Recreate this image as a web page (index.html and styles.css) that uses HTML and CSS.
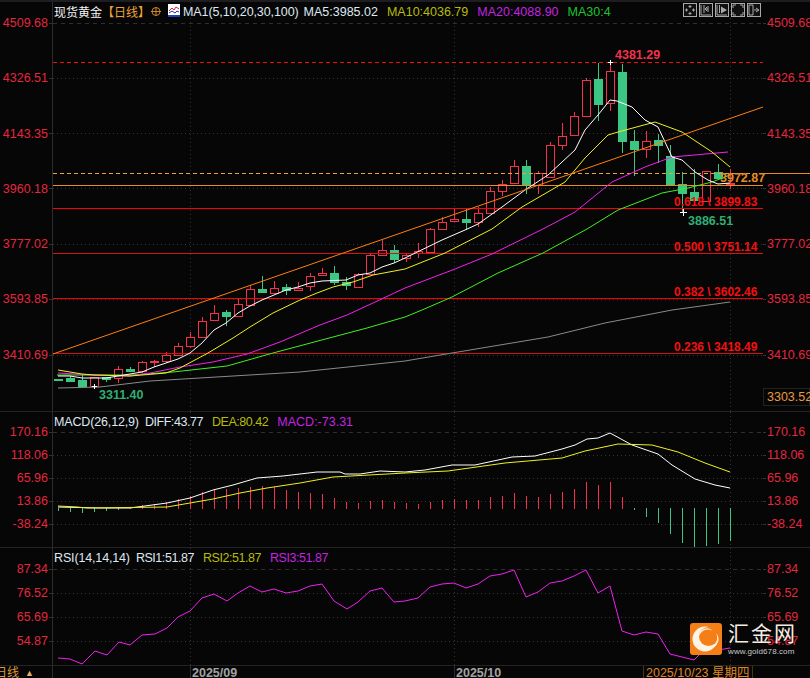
FILE: index.html
```html
<!DOCTYPE html>
<html lang="zh-CN">
<head>
  <meta charset="UTF-8" />
  <title>现货黄金 日线</title>
  <link rel="stylesheet" href="styles.css">
</head>
<body>
  <div class="topbar"></div>

  <!-- price panel -->
  <section class="panel panel-price">
    <div class="scale scale-left">
      <span class="tick">4509.68</span><span class="tick">4326.51</span><span class="tick">4143.35</span><span class="tick">3960.18</span><span class="tick">3777.02</span><span class="tick">3593.85</span><span class="tick">3410.69</span>
    </div>
    <div class="plot">
      <svg class="chart" width="710" height="409" viewBox="53 2 710 409">
        <g id="priceGrid"></g>
        <g id="candles"></g>
        <line class="hl hl-dash-red" x1="53" x2="763" y1="62.5" y2="62.5"/>
        <line class="hl hl-dash-orange" x1="53" x2="763" y1="173.5" y2="173.5"/>
        <line class="hl hl-orange" x1="763" x2="810" y1="173.5" y2="173.5"/>
        <line class="hl hl-orange" x1="53" x2="763" y1="185.5" y2="185.5"/>
        <line class="hl hl-red" x1="53" x2="763" y1="208.5" y2="208.5"/>
        <line class="hl hl-red-dim" x1="53" x2="763" y1="253.5" y2="253.5"/>
        <line class="hl hl-red" x1="53" x2="763" y1="298.5" y2="298.5"/>
        <line class="hl hl-red-dim" x1="53" x2="763" y1="353.5" y2="353.5"/>
        <g id="priceLines"></g>
        <line class="trend" x1="53" y1="354" x2="763" y2="107"/>
        <g class="marks">
          <path d="M608 62.5h5M610.5 60v5M680 212.5h7M683.5 209v7M92 386.5h5M94.5 384v5"/>
        </g>
        <text class="note note-high" x="615" y="59">4381.29</text>
        <text class="note note-low" x="688" y="225">3886.51</text>
        <text class="note note-low" x="99" y="399">3311.40</text>
        <text class="note note-last" x="720" y="182">3972.87</text>
        <text class="fib" x="674" y="206">0.618 \ 3899.83</text>
        <text class="fib" x="674" y="251">0.500 \ 3751.14</text>
        <text class="fib" x="674" y="296">0.382 \ 3602.46</text>
        <text class="fib" x="674" y="351">0.236 \ 3418.49</text>
      </svg>
      <div class="legend">
        <span class="name">现货黄金</span><span class="period">【日线】</span>
        <svg class="icon-cross" width="10" height="11" viewBox="0 0 10 11"><circle cx="5" cy="5.5" r="4"/><path d="M0 5.500h10M5 1v9"/></svg>
        <svg class="icon-ma" width="12" height="13" viewBox="0 0 12 13">
          <rect width="12" height="13" fill="#fff"/>
          <path d="M0 12h12" stroke="#1a3fc0" stroke-width="2"/>
          <path d="M1 7l3-3 2 2 2-3 3 2" fill="none" stroke="#e02020"/>
          <path d="M1 9l3-2 3 2 2-2 2 1" fill="none" stroke="#2030c0"/>
        </svg>
        <span class="white ma-name">MA1(5,10,20,30,100)</span>
        <span class="white ma-first">MA5:3985.02</span>
        <span class="olive value">MA10:4036.79</span>
        <span class="purple value">MA20:4088.90</span>
        <span class="green value">MA30:4</span>
      </div>
      <div class="toolbar">
        <button class="tool"><svg width="12" height="12" viewBox="0 0 12 12"><path d="M6 1v3M6 8v3M1 6h3M8 6h3M4.5 2.5h3M4.5 9.5h3M2.5 4.5v3M9.5 4.5v3"/></svg></button>
        <button class="tool"><svg width="12" height="12" viewBox="0 0 12 12"><path d="M1 1v10h10M4 1v8M8 2v6M5 5h3M5 5l2-2M5 5l2 2"/></svg></button>
        <button class="tool"><svg width="12" height="12" viewBox="0 0 12 12"><path d="M1 1v10h10M3.500 1v8"/><path class="solid" d="M5 2.500l6 3.500-6 3.500z"/></svg></button>
        <button class="tool"><svg width="12" height="12" viewBox="0 0 12 12"><path d="M1 4V1h3M8 1h3v3M11 8v3H8M4 11H1V8"/></svg></button>
        <button class="tool"><svg width="12" height="12" viewBox="0 0 12 12"><path d="M1 1h4v10H1zM6 6h4M8 4l3 2-3 2"/></svg></button>
      </div>
    </div>
    <div class="scale scale-right">
      <span class="tick">4509.68</span><span class="tick">4326.51</span><span class="tick">4143.35</span><span class="tick">3960.18</span><span class="tick">3777.02</span><span class="tick">3593.85</span><span class="tick">3410.69</span>
      <span class="last-tag">3303.52</span>
    </div>
  </section>

  <!-- MACD panel -->
  <section class="panel panel-macd">
    <div class="scale scale-left">
      <span class="tick">170.16</span><span class="tick">118.06</span><span class="tick">65.96</span><span class="tick">13.86</span><span class="tick">-38.24</span>
    </div>
    <div class="plot">
      <svg class="chart" width="710" height="135" viewBox="53 412 710 135">
        <g id="macdGrid"></g>
        <g id="macdBars"></g>
        <g id="macdLines"></g>
      </svg>
      <div class="legend">
        <span class="white title">MACD(26,12,9)</span>
        <span class="white tight value-first">DIFF:43.77</span>
        <span class="olive tight value">DEA:80.42</span>
        <span class="purple value">MACD:-73.31</span>
      </div>
    </div>
    <div class="scale scale-right">
      <span class="tick">170.16</span><span class="tick">118.06</span><span class="tick">65.96</span><span class="tick">13.86</span><span class="tick">-38.24</span>
    </div>
  </section>

  <!-- RSI panel -->
  <section class="panel panel-rsi">
    <div class="scale scale-left">
      <span class="tick">87.34</span><span class="tick">76.52</span><span class="tick">65.69</span><span class="tick">54.87</span>
    </div>
    <div class="plot">
      <svg class="chart" width="710" height="117" viewBox="53 548 710 117">
        <g id="rsiGrid"></g>
        <g id="rsiLines"></g>
      </svg>
      <div class="legend">
        <span class="white title">RSI(14,14,14)</span>
        <span class="white tight value-first">RSI1:51.87</span>
        <span class="olive tight value">RSI2:51.87</span>
        <span class="purple tight value">RSI3:51.87</span>
      </div>
    </div>
    <div class="scale scale-right">
      <span class="tick">87.34</span><span class="tick">76.52</span><span class="tick">65.69</span><span class="tick">54.87</span>
    </div>
  </section>

  <footer class="time-axis">
    <div class="time-corner"><span class="corner-text">日线</span><span class="corner-arrow">▲</span></div>
    <div class="time-labels">
      <span class="month month-sep">2025/09</span>
      <span class="month month-oct">2025/10</span>
      <span class="cursor-date">2025/10/23 星期四</span>
    </div>
  </footer>

  <div class="watermark">
    <svg class="logo" width="32" height="32" viewBox="0 0 32 32">
      <rect width="32" height="32" rx="3" fill="#f57f17"/>
      <circle cx="15" cy="16" r="12.500" fill="#fdf3e6"/>
      <circle cx="18.500" cy="13.500" r="9.500" fill="#f57f17"/>
      <path d="M9 13a9.500 9.500 0 0 1 14-5a8 8 0 0 0-14 5z" fill="#fdf3e6"/>
      <path d="M26 10a11 11 0 0 1-5 15a9 9 0 0 0 5-15z" fill="#fdf3e6"/>
    </svg>
    <div class="brand">
      <span class="brand-name">汇金网</span>
      <span class="brand-url">www.gold678.com</span>
    </div>
  </div>

  <script src="chart.js"></script>
</body>
</html>
```

FILE: styles.css
```css
* {
  margin: 0;
  padding: 0;
  box-sizing: border-box;
}
html, body {
  width: 810px;
  height: 678px;
  overflow: hidden;
  background: #060606;
  font-family: "Liberation Sans", "Noto Sans CJK SC", sans-serif;
  font-size: 12.5px;
}

.topbar {
  height: 2px;
  background: #1d1d22;
}

.panel {
  display: grid;
  grid-template-columns: 53px 710px 47px;
  border-bottom: 1px solid #242424;
}
.panel-price { height: 410px; --pitch: 55.3px; --start: 15px; }
.panel-macd { height: 136px; --pitch: 23px; --start: 14px; }
.panel-rsi { height: 118px; --pitch: 24px; --start: 15px; }

.scale {
  display: flex;
  flex-direction: column;
  padding-top: var(--start);
  color: #e4263f;
  position: relative;
}
.scale-left {
  align-items: flex-end;
  padding-right: 4px;
  border-right: 1px solid #2c2c2c;
}
.scale-right {
  padding-left: 4px;
  white-space: nowrap;
}
.tick {
  height: var(--pitch);
  line-height: 12px;
  flex: none;
}

.last-tag {
  position: absolute;
  top: 386px;
  left: 0;
  width: 47px;
  height: 18px;
  padding-left: 3px;
  line-height: 17px;
  border: 1px solid #222;
  color: #e89a3c;
}

.plot {
  position: relative;
}
.chart {
  display: block;
  overflow: visible;
}

.legend {
  position: absolute;
  top: 0;
  left: 1px;
  height: 19px;
  display: flex;
  align-items: center;
  white-space: nowrap;
  pointer-events: none;
}
.name { color: #f2f2f2; font-size: 12px; }
.period { color: #eda23a; font-size: 12px; }
.icon-cross { fill: none; stroke: #c9872c; margin-left: 1px; }
.icon-ma { margin-top: -3px; margin-left: 7px; }
.ma-name { margin-left: 3px; letter-spacing: -0.1px; }
.ma-first { margin-left: 5px; }
.value { margin-left: 9px; }
.value-first { margin-left: 6px; }
.title { letter-spacing: -0.15px; }
.tight { letter-spacing: -0.45px; }
.white { color: #dfe8f2; }
.olive { color: #b8bb0c; }
.purple { color: #c423e0; }
.green { color: #1fc32c; }

.toolbar {
  position: absolute;
  top: 1px;
  right: 2px;
  display: flex;
  gap: 2px;
}
.tool {
  width: 14px;
  height: 14px;
  border: 1px solid #a8a8a8;
  background: #101010;
  display: flex;
  align-items: center;
  justify-content: center;
}
.tool svg { fill: none; stroke: #a8a8a8; stroke-width: 1; }
.tool .solid { fill: #a8a8a8; stroke: none; }

/* chart strokes */
.grid { stroke: #343434; stroke-dasharray: 1 3; shape-rendering: crispEdges; }
.grid-dash { stroke: #2e2e2e; stroke-dasharray: 4 4; shape-rendering: crispEdges; }
.axis-tick { stroke: #333; shape-rendering: crispEdges; }
.hl { stroke-width: 1; shape-rendering: crispEdges; }
.hl-dash-red { stroke: #f01010; stroke-dasharray: 4 3; }
.hl-dash-orange { stroke: #f0a030; stroke-dasharray: 4 3; }
.hl-orange { stroke: #ee8a1c; }
.hl-red { stroke: #ff0000; }
.hl-red-dim { stroke: #d81010; }
.trend { stroke: #ff7f10; stroke-width: 1; }

.wick-red, .body-red { stroke: #f4304c; }
.body-red { fill: #060606; }
.wick-green { stroke: #3cc684; }
.body-green { fill: #3cc684; stroke: #3cc684; }
.wick-red, .wick-green, .body-red, .body-green { shape-rendering: crispEdges; stroke-width: 1; }

.ma { fill: none; stroke-width: 1; }
.ma5 { stroke: #ffffff; }
.ma10 { stroke: #f0f020; }
.ma20 { stroke: #f020f0; }
.ma30 { stroke: #40f020; }
.ma100 { stroke: #8a8a8a; }
.rsi { stroke: #f020f0; }

.marks path { stroke: #fff; fill: none; shape-rendering: crispEdges; }

.note, .fib { font-size: 12.5px; font-family: "Liberation Sans", sans-serif; }
.note-high { fill: #f0334d; font-weight: bold; }
.note-low { fill: #2fae74; font-weight: bold; }
.note-last { fill: #e58a26; font-weight: bold; }
.fib { fill: #f50f0f; font-weight: bold; font-size: 12px; }

/* time axis */
.time-axis {
  display: grid;
  grid-template-columns: 53px 1fr;
  height: 12px;
  overflow: hidden;
  line-height: 14px;
}
.time-corner {
  position: relative;
  display: flex;
  justify-content: flex-end;
  gap: 6px;
  padding-right: 18px;
  border-right: 1px solid #2c2c2c;
  color: #dd9a3a;
  white-space: nowrap;
}
.corner-text { font-size: 12px; }
.corner-arrow { font-size: 9px; color: #dfb070; }
.time-labels {
  display: flex;
  padding-left: 137px;
  white-space: nowrap;
}
.month {
  color: #a3a3a3;
  font-weight: bold;
  border-left: 1px solid #2c2c2c;
  padding-left: 1px;
}
.month-sep { width: 264px; }
.month-oct { width: 189px; }
.cursor-date {
  color: #df8524;
  width: 110px;
  padding-left: 2px;
  border-left: 1px solid #4a3416;
  border-right: 1px solid #4a3416;
}

.watermark {
  position: absolute;
  top: 623px;
  left: 690px;
  display: flex;
  gap: 6px;
}
.logo { display: block; }
.brand {
  display: flex;
  flex-direction: column;
  color: #f4ebe0;
}
.brand-name {
  font-size: 21px;
  line-height: 22px;
  letter-spacing: 2px;
  white-space: nowrap;
}
.brand-url {
  font-size: 8px;
  line-height: 10px;
  margin-top: 2px;
  color: #c9c9c9;
  letter-spacing: 0.1px;
  white-space: nowrap;
}
```

FILE: chart.js
```js
// pixel data read off the chart: page coordinates, the svg viewBoxes use the same ones
const SVG_NS = "http://www.w3.org/2000/svg";

function add(parent, tag, cls, attrs) {
  const el = document.createElementNS(SVG_NS, tag);
  el.setAttribute("class", cls);
  for (const k in attrs) el.setAttribute(k, attrs[k]);
  parent.appendChild(el);
  return el;
}

function polyline(parent, cls, pts) {
  add(parent, "polyline", "ma " + cls, { points: pts.map(p => p.join(",")).join(" ") });
}

function drawGrid(id, rows, top, bottom) {
  const g = document.getElementById(id);
  rows.forEach((y, i) => {
    add(g, "line", i === 0 ? "grid-dash" : "grid", { x1: 53, x2: 763, y1: y, y2: y });
    add(g, "line", "axis-tick", { x1: 49, x2: 52, y1: y, y2: y });
    add(g, "line", "axis-tick", { x1: 763, x2: 766, y1: y, y2: y });
  });
  [190.5, 454.5, 730.5].forEach(x => {
    add(g, "line", "grid", { x1: x, x2: x, y1: top, y2: bottom });
  });
}

// [kind, bodyTop, bodyBottom, wickTop, wickBottom], first candle at x=58, one every 12px
const candles = [
  ["g",379,380,379,380],["g",378,381,376,382],["g",380,386,375,386],["r",377,386,377,388],
  ["g",377,379,377,382],["r",369,378,366,383],["g",369,371,367,372],["r",362,371,361,373],
  ["r",361,362,360,367],["r",355,361,352,363],["r",346,355,343,356],["r",337,346,332,348],
  ["r",321,337,317,337],["r",313,320,305,321],["g",312,316,310,326],["r",304,316,299,317],
  ["r",289,305,285,305],["g",289,292,276,292],["r",288,293,281,293],["g",287,290,284,295],
  ["r",288,290,282,290],["r",276,286,273,291],["r",273,275,268,276],["g",273,282,266,285],
  ["g",282,285,277,290],["r",274,287,273,288],["r",255,274,254,275],["r",250,255,240,256],
  ["g",250,259,245,263],["r",255,258,253,262],["r",251,253,243,258],["r",229,252,228,253],
  ["r",222,229,217,230],["r",219,221,209,222],["g",219,222,209,230],["r",213,222,207,227],
  ["r",191,213,187,213],["r",184,191,180,196],["r",166,183,160,183],["g",166,185,160,194],
  ["r",173,185,171,194],["r",145,177,142,178],["r",136,145,123,150],["r",116,135,112,135],
  ["r",80,116,78,116],["g",79,104,63,121],["r",71,103,62,111],["g",72,141,64,153],
  ["g",141,149,130,176],["r",141,149,131,158],["g",140,145,134,163],["g",156,184,145,185],
  ["g",184,193,172,212],["g",192,200,169,200],["r",171,201,171,201],["g",172,178,164,180],
  ["r",183,184,169,189]
];

const candleGroup = document.getElementById("candles");
candles.forEach((c, i) => {
  const x = 58 + 12 * i + 0.5;
  const kind = c[0] === "r" ? "red" : "green";
  add(candleGroup, "line", "wick-" + kind, { x1: x, x2: x, y1: c[3], y2: c[4] });
  add(candleGroup, "rect", "body-" + kind, { x: x - 4, y: c[1] + 0.5, width: 8, height: Math.max(c[2] - c[1], 0) });
});

const priceLines = document.getElementById("priceLines");
polyline(priceLines, "ma100", [[58,388],[100,387],[150,381],[233,376],[300,372],[405,361],[452,353],[548,337],[605,323],[672,310],[730,302]]);
polyline(priceLines, "ma30", [[57,375],[133,375],[173,372],[227,366],[273,353],[333,337],[367,328],[405,317],[422,310],[452,297],[498,273],[543,253],[587,229],[618,210],[662,193],[688,188],[712,182],[730,175]]);
polyline(priceLines, "ma20", [[58,373],[94,375],[130,376],[150,373],[180,367],[213,362],[247,354],[280,342],[320,325],[347,315],[373,303],[405,288],[455,269],[492,254],[543,229],[575,212],[612,182],[645,167],[672,157],[728,152]]);
polyline(priceLines, "ma10", [[58,370],[70,372],[82,374],[94,375],[130,376],[166,373],[180,368],[208,353],[233,338],[250,327],[273,313],[300,300],[317,293],[333,287],[353,282],[373,275],[405,269],[445,253],[492,229],[522,207],[565,182],[585,158],[608,135],[618,132],[655,122],[682,132],[712,152],[730,167]]);
polyline(priceLines, "ma5", [[58,376],[70,376],[82,378],[106,378],[118,376],[130,374],[142,372],[154,367],[166,363],[178,359],[190,353],[202,343],[214,330],[226,323],[238,313],[250,306],[262,300],[274,295],[286,290],[298,287],[310,283],[322,281],[346,280],[358,275],[370,273],[382,267],[394,263],[405,258],[442,240],[465,230],[478,224],[502,207],[525,190],[548,175],[575,150],[585,130],[598,115],[610,100],[617,101],[632,107],[645,120],[658,127],[672,157],[682,160],[695,172],[708,180],[718,184],[730,183]]);

// macd bars: end of each bar, the zero line sits at 509 for red and 508 for green
const macd = [511,512,513,512,511,510,508,505,504,502,499,496,492,489,489,488,487,486,487,490,492,493,494,498,502,503,501,500,502,503,504,502,500,499,500,500,497,496,493,496,497,494,492,489,482,485,482,497,510,517,523,534,543,547,546,544,541];
const barGroup = document.getElementById("macdBars");
macd.forEach((end, i) => {
  const x = 58 + 12 * i + 0.5;
  const isRed = end < 509;
  add(barGroup, "line", isRed ? "wick-red" : "wick-green", { x1: x, x2: x, y1: isRed ? 509 : 508, y2: end });
});

const macdLines = document.getElementById("macdLines");
polyline(macdLines, "ma5", [[58,507],[100,508],[130,508],[167,503],[190,498],[213,490],[233,485],[257,478],[283,476],[317,472],[340,472],[345,474],[360,474],[380,471],[405,472],[425,470],[452,465],[475,465],[512,457],[535,456],[562,449],[575,445],[587,439],[598,438],[610,433],[632,445],[658,454],[672,465],[695,479],[715,485],[730,488]]);
polyline(macdLines, "ma10", [[58,506],[77,507],[87,508],[167,507],[190,503],[213,499],[240,493],[267,488],[300,483],[333,477],[405,473],[448,471],[505,463],[562,458],[585,451],[618,444],[652,445],[678,452],[705,463],[730,472]]);

polyline(document.getElementById("rsiLines"), "rsi", [[58,658],[70,659],[82,664],[95,651],[107,655],[119,642],[130,645],[142,635],[155,634],[167,628],[178,617],[190,611],[202,598],[214,594],[227,601],[238,593],[250,586],[262,592],[274,589],[286,593],[298,591],[310,586],[322,584],[334,601],[347,609],[358,602],[370,591],[382,588],[394,602],[405,601],[418,598],[430,587],[442,584],[454,583],[466,588],[478,584],[490,576],[502,574],[514,570],[526,597],[538,592],[550,583],[562,581],[574,576],[586,570],[598,593],[610,586],[622,631],[634,635],[646,632],[658,634],[670,654],[682,657],[694,660],[706,648],[718,650],[730,648]]);

drawGrid("priceGrid", [23.5, 78.5, 133.5, 188.5, 244.5, 299.5, 355.5], 2, 411);
drawGrid("macdGrid", [432.5, 455.5, 478.5, 501.5, 524.5], 412, 547);
drawGrid("rsiGrid", [569.5, 593.5, 617.5, 641.5], 548, 665);
```
